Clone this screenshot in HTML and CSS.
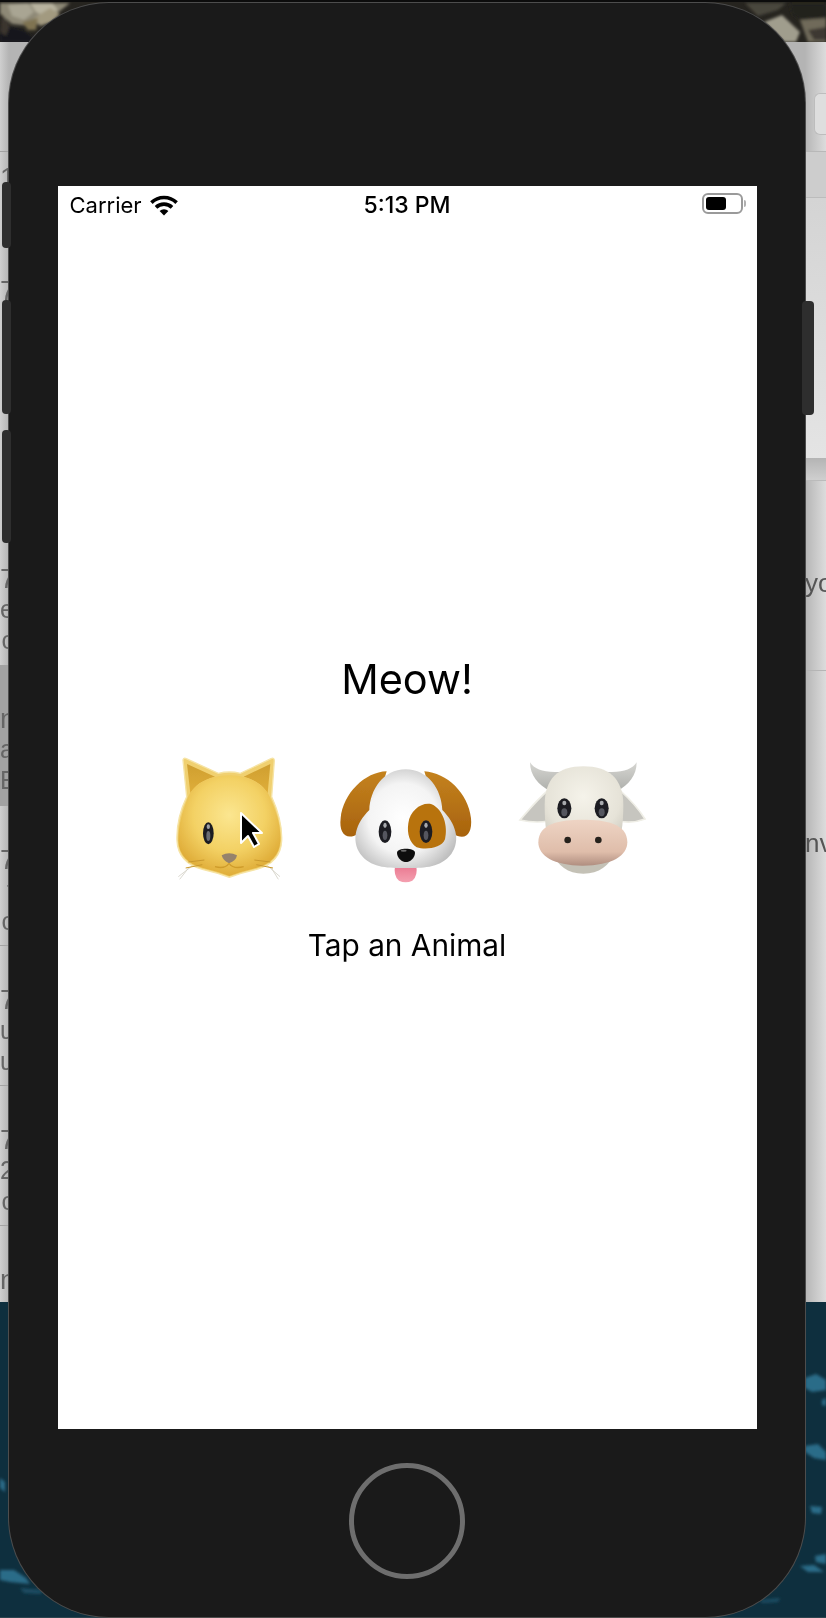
FILE: index.html
```html
<!DOCTYPE html>
<html lang="en">
<head>
<meta charset="utf-8">
<title>Meow!</title>
<link rel="stylesheet" href="styles.css">
</head>
<body>
<div class="desktop">
  <svg class="wall wall-top" viewBox="0 0 826 42" aria-hidden="true">
    <defs><filter id="wb"><feGaussianBlur stdDeviation="1.5"/></filter></defs>
    <rect width="826" height="42" fill="#26241f"/>
    <g filter="url(#wb)">
      <path d="M0 3H70L46 22 30 26 12 24 0 14Z" fill="#8d8876"/>
      <path d="M8 5 28 3 34 12 24 20 12 16Z" fill="#a9a593"/>
      <path d="M30 3H52L58 10 44 16 36 12Z" fill="#b8b39f"/>
      <path d="M34 18 50 8 60 14 52 22 40 26Z" fill="#a29a80"/>
      <path d="M22 22 38 18 36 30 28 30Z" fill="#7f7351"/>
      <path d="M0 24 24 30 40 42H0Z" fill="#17171b"/>
      <path d="M2 14 10 26 6 36 0 32Z" fill="#3a352e"/>
      <path d="M745 3H786L778 10 758 16Z" fill="#4a473d"/>
      <path d="M764 22 782 15 800 32 796 42H784Z" fill="#a09d8d"/>
      <path d="M790 4H826V18L806 24 792 14Z" fill="#24221e"/>
      <path d="M800 20 826 18V42H808Z" fill="#6f6a5a"/>
      <path d="M808 30 826 27V40H814Z" fill="#3d3931"/>
    </g>
    <rect width="826" height="2" fill="#0c0c0c"/>
  </svg>
  <svg class="wall wall-bottom" viewBox="0 0 826 316" aria-hidden="true">
    <defs><filter id="wc"><feGaussianBlur stdDeviation="1.8"/></filter></defs>
    <rect width="826" height="316" fill="#0e2f3e"/>
    <g filter="url(#wc)" fill="#2a6c88">
      <path d="M805 76 816 72 826 78V88L812 90 805 86Z"/>
      <path d="M822 98 826 96V104L822 103Z"/>
      <path d="M805 144 818 142 826 150V158L814 156 805 150Z"/>
      <path d="M810 204 822 205 821 212 812 211Z"/>
      <path d="M815 254 826 252V262L816 260Z"/>
      <path d="M800 264 814 263 824 270 808 270Z"/>
      <path d="M760 298 780 296 778 300 762 301Z" fill="#1b4d63"/>
      <path d="M0 176 5 180 5 190 0 186Z"/>
      <path d="M0 268 14 268 26 276 30 282 10 280 0 278Z"/>
      <path d="M20 286 44 288 40 292 24 291Z" fill="#1b4d63"/>
    </g>
    <rect y="315" width="826" height="1" fill="#2c444f"/>
    <rect x="222" y="315" width="60" height="1" fill="#5d8196"/>
  </svg>

  <div class="window">
    <div class="list">
      <div class="list-head"></div>
      <div class="row row-short"><p class="line">1</p></div>
      <div class="row row-plain"><p class="line">7</p></div>
      <div class="row row-plain"></div>
      <div class="row"><p class="line">7</p><p class="line line-sm">e</p><p class="line line-sm">c</p></div>
      <div class="row row-active"><p class="line">n</p><p class="line line-sm">ar</p><p class="line line-sm">Er</p></div>
      <div class="row row-sep"><p class="line">7</p><p class="line line-sm">t</p><p class="line line-sm">c</p></div>
      <div class="row row-sep"><p class="line">7</p><p class="line line-sm">u</p><p class="line line-sm">u</p></div>
      <div class="row row-sep"><p class="line">7</p><p class="line line-sm">2</p><p class="line line-sm">c</p></div>
      <div class="row"><p class="line">n</p></div>
    </div>
    <div class="detail">
      <div class="detail-head"><span class="search"></span></div>
      <div class="detail-bar"></div>
      <div class="detail-fill"></div>
      <div class="detail-band"></div>
      <div class="detail-block"><p class="detail-text">yo</p></div>
      <div class="detail-block detail-block-last"><p class="detail-text">nv</p></div>
    </div>
  </div>

  <span class="side side-a"></span>
  <span class="side side-b"></span>
  <span class="side side-c"></span>

  <div class="phone">
    <div class="screen">
      <div class="status">
        <div class="status-left">
          <span class="carrier">Carrier</span>
          <svg class="wifi" viewBox="0 0 30 21" aria-hidden="true">
            <path d="M2.4 7.6A18 18 0 0 1 27.6 7.6" fill="none" stroke="#000" stroke-width="3.6"/>
            <path d="M7 12.4A11.5 11.5 0 0 1 23 12.4" fill="none" stroke="#000" stroke-width="3.6"/>
            <path d="M15 20.5 10.6 16A6.2 6.2 0 0 1 19.4 16Z" fill="#000"/>
          </svg>
        </div>
        <span class="time">5:13 PM</span>
        <div class="status-right">
          <span class="battery"><span class="battery-level"></span></span>
          <span class="battery-nub"></span>
        </div>
      </div>
      <div class="stage">
        <h1 class="sound">Meow!</h1>
        <div class="animals">
          <svg class="animal animal-cat" viewBox="0 0 390 405" aria-label="Cat">
            <defs>
              <radialGradient id="catFace" gradientUnits="userSpaceOnUse" cx="193" cy="195" r="180">
                <stop offset="0" stop-color="#fbe690"/>
                <stop offset=".6" stop-color="#f3d164"/>
                <stop offset="1" stop-color="#e0ae3a"/>
              </radialGradient>
              <linearGradient id="catEar" x1="0" x2="0" y1="0" y2="1">
                <stop offset="0" stop-color="#cf9f30"/>
                <stop offset="1" stop-color="#dfae3a"/>
              </linearGradient>
              <filter id="soft1"><feGaussianBlur stdDeviation="1.8"/></filter>
            </defs>
            <g filter="url(#soft1)">
              <path d="M85 345 40 380M72 352 44 388M305 345 345 380M318 352 340 388" stroke="#d4d1c6" stroke-width="2.5" fill="none"/>
              <path d="M54 30Q56 22 64 26L160 70Q193 62 226 70L318 26Q328 22 328 32L320 140C338 180 352 225 350 272C348 318 320 345 275 358Q230 368 193 382Q156 368 112 358C66 345 38 318 36 272C34 225 46 180 65 140Z" fill="#f0d070" stroke="#f6e4a6" stroke-width="4"/>
              <path d="M66 42 150 80C112 90 90 106 76 130Z" fill="url(#catEar)"/>
              <path d="M316 42 236 80C272 90 294 106 308 130Z" fill="url(#catEar)"/>
              <path d="M193 76C125 76 78 110 66 150C50 190 40 228 40 272C42 316 70 342 114 354Q156 364 193 378Q230 364 273 354C316 342 344 316 346 272C348 228 336 190 318 150C306 110 260 76 193 76Z" fill="url(#catFace)"/>
              <ellipse cx="130" cy="250" rx="16" ry="33" fill="#1c1d21"/>
              <ellipse cx="130" cy="258" rx="6" ry="15" fill="#6a6c72"/>
              <ellipse cx="130" cy="230" rx="5" ry="7" fill="#9fa1a6"/>
              <path d="M170 316Q192 304 216 316Q214 332 192 340Q174 332 170 316Z" fill="#95826c"/>
              <path d="M192 340Q180 358 150 350M192 340Q205 358 236 350" stroke="#cf9c2b" stroke-width="4" fill="none"/>
              <path d="M118 330 70 336M112 344 62 354M268 330 316 336M274 344 324 354" stroke="#c9992e" stroke-width="3" fill="none"/>
            </g>
          </svg>
          <svg class="animal animal-dog" viewBox="0 0 420 390" aria-label="Dog">
            <defs>
              <radialGradient id="dogFace" gradientUnits="userSpaceOnUse" cx="205" cy="175" r="175">
                <stop offset="0" stop-color="#fff"/>
                <stop offset=".6" stop-color="#f4f4f4"/>
                <stop offset="1" stop-color="#bfbfbf"/>
              </radialGradient>
              <linearGradient id="dogEar" x1="0" x2="0" y1="0" y2="1">
                <stop offset="0" stop-color="#c4821f"/>
                <stop offset="1" stop-color="#a8630d"/>
              </linearGradient>
              <filter id="soft2"><feGaussianBlur stdDeviation="1.7"/></filter>
              <linearGradient id="tongue" x1="0" x2="0" y1="0" y2="1">
                <stop offset="0" stop-color="#e8708a"/>
                <stop offset="1" stop-color="#f4a0b0"/>
              </linearGradient>
            </defs>
            <g filter="url(#soft2)">
              <path d="M155 34C90 36 24 100 17 175C12 214 28 236 56 228C76 222 96 200 120 150Z" fill="url(#dogEar)"/>
              <path d="M268 34C335 38 400 100 408 175C412 216 396 238 368 228C348 222 326 200 302 150Z" fill="url(#dogEar)"/>
              <path d="M181 312Q212 302 243 312Q250 348 232 362Q212 372 192 362Q174 348 181 312Z" fill="url(#tongue)"/>
              <path d="M212 28C145 28 105 90 103 150C62 190 48 240 76 282C108 326 165 324 212 324C260 324 315 326 349 282C378 240 362 190 322 150C320 90 280 28 212 28Z" fill="url(#dogFace)"/>
              <path d="M220 190C225 150 262 125 290 133C325 148 340 200 330 238C320 266 270 270 245 262C225 250 215 222 220 190Z" fill="#b8730f"/>
              <ellipse cx="150" cy="215" rx="19" ry="34" fill="#1d1e22"/>
              <ellipse cx="150" cy="226" rx="7" ry="14" fill="#55575e"/>
              <ellipse cx="150" cy="196" rx="5" ry="8" fill="#a8aaae"/>
              <ellipse cx="273" cy="215" rx="19" ry="34" fill="#1d1e22"/>
              <ellipse cx="273" cy="226" rx="7" ry="14" fill="#55575e"/>
              <ellipse cx="273" cy="196" rx="5" ry="8" fill="#a8aaae"/>
              <path d="M186 278C186 262 240 262 240 278C240 295 224 306 213 306C202 306 186 295 186 278Z" fill="#111"/>
              <ellipse cx="206" cy="272" rx="9" ry="3" fill="#6a6a6a"/>
            </g>
          </svg>
          <svg class="animal animal-cow" viewBox="0 0 420 390" aria-label="Cow">
            <defs>
              <radialGradient id="cowFace" gradientUnits="userSpaceOnUse" cx="220" cy="125" r="185">
                <stop offset="0" stop-color="#f5f3ea"/>
                <stop offset=".6" stop-color="#e6e3d8"/>
                <stop offset="1" stop-color="#c4c1b6"/>
              </radialGradient>
              <linearGradient id="cowNose" x1="0" x2="0" y1="0" y2="1">
                <stop offset="0" stop-color="#eed4c4"/>
                <stop offset=".7" stop-color="#dfbdaa"/>
                <stop offset="1" stop-color="#b08e80"/>
              </linearGradient>
              <linearGradient id="horn" x1="0" x2="0" y1="0" y2="1">
                <stop offset="0" stop-color="#d6d6d2"/>
                <stop offset="1" stop-color="#aeafab"/>
              </linearGradient>
              <filter id="soft3"><feGaussianBlur stdDeviation="1.8"/></filter>
            </defs>
            <g filter="url(#soft3)">
              <path d="M60 22C74 44 104 54 155 50L120 108C85 90 60 62 60 22Z" fill="url(#horn)"/>
              <path d="M380 22C366 44 336 54 285 50L322 108C356 90 380 62 380 22Z" fill="url(#horn)"/>
              <path d="M112 108C80 135 52 170 30 195C52 200 82 204 116 198Z" fill="#c6c5bf" stroke="#efeee6" stroke-width="5"/>
              <path d="M332 108C362 135 388 165 405 192C384 200 354 204 326 198Z" fill="#c6c5bf" stroke="#efeee6" stroke-width="5"/>
              <path d="M220 34C145 34 104 70 104 150C104 260 125 356 220 356C315 356 340 260 340 150C340 70 295 34 220 34Z" fill="url(#cowFace)"/>
              <path d="M218 194C150 194 85 205 85 262C85 302 130 332 218 332C306 332 352 302 352 262C352 205 286 194 218 194Z" fill="url(#cowNose)"/>
              <ellipse cx="163" cy="160" rx="21" ry="30" fill="#1d1e22"/>
              <ellipse cx="163" cy="172" rx="9" ry="12" fill="#55575e"/>
              <ellipse cx="163" cy="144" rx="6" ry="7" fill="#a8aaae"/>
              <ellipse cx="275" cy="160" rx="21" ry="30" fill="#1d1e22"/>
              <ellipse cx="275" cy="172" rx="9" ry="12" fill="#55575e"/>
              <ellipse cx="275" cy="144" rx="6" ry="7" fill="#a8aaae"/>
              <circle cx="173" cy="255" r="10" fill="#26201e"/>
              <circle cx="265" cy="255" r="10" fill="#26201e"/>
            </g>
          </svg>
        </div>
        <p class="prompt">Tap an Animal</p>
      </div>
    </div>
    <span class="home"></span>
  </div>

  <svg class="cursor" viewBox="0 0 26 38" aria-hidden="true">
    <path d="M2 2V32L9 25 15 36 20 33 14 22H23Z" fill="#000" stroke="#fff" stroke-width="2" stroke-linejoin="round"/>
  </svg>
</div>
</body>
</html>
```
FILE: styles.css
```css
* { box-sizing: border-box; }
html, body { margin: 0; padding: 0; }
body { font-family: "Inter", "Liberation Sans", sans-serif; background: #0e2f3e; }

.desktop { position: relative; width: 826px; height: 1618px; overflow: hidden; }
.wall { position: absolute; left: 0; display: block; width: 826px; }
.wall-top { top: 0; height: 42px; }
.wall-bottom { top: 1302px; height: 316px; }

.window {
  position: absolute; left: 0; top: 42px; width: 826px; height: 1260px;
  display: flex; justify-content: space-between;
  background: linear-gradient(to right, #cfcfcf 0, #b4b4b4 9px, #b4b4b4 805px, #c2c2c2 812px, #dcdcdc 826px);
  font-family: "Liberation Sans", sans-serif; overflow: hidden;
}
.list { width: 14px; display: flex; flex-direction: column; }
.list-head { height: 110px; flex: none; border-bottom: 1px solid #a2a2a2; }
.row { height: 140px; flex: none; padding-top: 38px; text-align: right; }
.row-short { height: 93px; padding-top: 10px; }
.row-plain { padding-top: 30px; }
.row-active { background: #a2a2a2; height: 141px; }
.row-sep { border-bottom: 1px solid #a4a4a4; }
.line { margin: 0; height: 31px; line-height: 31px; font-size: 28px; white-space: nowrap; color: #666; filter: blur(.5px); }
.line-sm { font-size: 25px; }

.detail { width: 21px; display: flex; flex-direction: column; }
.detail-head { height: 110px; flex: none; padding: 51px 0 0 9px; border-bottom: 1px solid #b8b8b8; }
.search { display: block; width: 20px; height: 42px; border: 1px solid #bdbdbd; border-right: 0; border-radius: 6px 0 0 6px; background: #dedede; }
.detail-bar { height: 46px; flex: none; background: #cdcdcd; border-bottom: 1px solid #bcbcbc; }
.detail-fill { height: 260px; flex: none; background: linear-gradient(to bottom, #d4d4d4, #e4e4e4); }
.detail-band { height: 23px; flex: none; background: linear-gradient(to bottom, #b4b4b4, #cfcfcf); border-bottom: 1px solid #bbb; }
.detail-block { height: 190px; flex: none; padding-top: 87px; border-bottom: 1px solid #b5b5b5; }
.detail-block-last { height: 479px; padding-top: 157px; border-bottom: 0; }
.detail-text { margin: 0; line-height: 30px; font-size: 26px; white-space: nowrap; color: #555; filter: blur(.5px); }

.side { position: absolute; z-index: 2; background: #2e2e2e; border-radius: 4px; }
.side-a { left: 2px; top: 182px; width: 9px; height: 66px; }
.side-b { left: 2px; top: 300px; width: 9px; height: 114px; }
.side-c { left: 2px; top: 430px; width: 9px; height: 113px; }
.phone::after { content: ""; position: absolute; right: -9px; top: 298px; width: 12px; height: 114px; background: #2e2e2e; border-radius: 4px; }

.phone {
  position: absolute; left: 9px; top: 3px; width: 796px; height: 1614px;
  background: #1a1a1a; border-radius: 100px; box-shadow: 0 0 0 1px #4d4d4d;
  padding-top: 183px; display: flex; flex-direction: column; align-items: center;
}
.screen { width: 699px; height: 1243px; flex: none; background: #fff; display: flex; flex-direction: column; color: #000; }
.status { height: 38px; flex: none; position: relative; display: flex; align-items: center; justify-content: space-between; padding: 0 11px 0 12px; }
.status-left { display: flex; align-items: center; gap: 7px; }
.carrier { font-size: 22px; line-height: 26px; filter: blur(.3px); }
.wifi { width: 30px; height: 21px; display: block; }
.time { position: absolute; left: 0; right: 0; text-align: center; font-size: 23px; line-height: 26px; font-weight: 500; filter: blur(.3px); }
.status-right { display: flex; align-items: center; gap: 1px; margin-top: -3px; }
.battery { width: 41px; height: 21px; border: 2px solid #9a9a9a; border-radius: 6px; padding: 2px; display: block; }
.battery-level { display: block; width: 20px; height: 13px; background: #000; border-radius: 3px; }
.battery-nub { width: 2px; height: 7px; background: #b0b0b0; border-radius: 0 2px 2px 0; }

.stage { flex: 1; display: flex; flex-direction: column; align-items: center; justify-content: center; padding-bottom: 38px; }
.sound { margin: 0; font-size: 41.5px; line-height: 52px; font-weight: 400; filter: blur(.3px); }
.animals { margin-top: 45px; height: 140px; width: 485px; display: flex; justify-content: space-between; align-items: flex-start; }
.animal { display: block; flex: none; }
.animal-cat { width: 130px; height: 135px; }
.animal-dog { width: 140px; height: 130px; margin-top: 10px; margin-left: 40px; }
.animal-cow { width: 140px; height: 130px; margin-top: 5px; margin-left: 35px; }
.prompt { margin: 37px 0 0; font-size: 29.8px; line-height: 36px; filter: blur(.3px); }

.home { width: 116px; height: 116px; flex: none; margin-top: 34px; border: 5px solid #6e6e6e; border-radius: 50%; }

.cursor { position: absolute; z-index: 3; left: 239px; top: 811px; width: 26px; height: 38px; }
```
